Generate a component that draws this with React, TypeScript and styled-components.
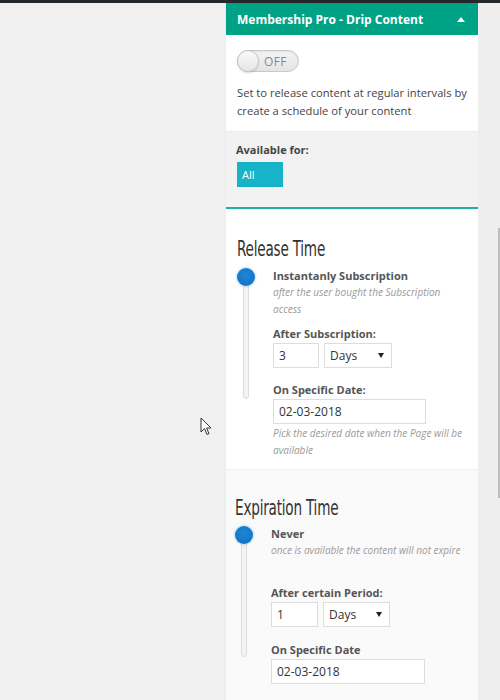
import React from "react";
import styled, { createGlobalStyle } from "styled-components";

const Global = createGlobalStyle`
  html, body { margin: 0; padding: 0; }
  body { background: #f0f0f0; font-family: "Open Sans", "Noto Sans", sans-serif; width: 500px; height: 700px; overflow: hidden; }
`;

const Page = styled.div`
  position: relative;
  width: 500px;
  height: 700px;
  display: flex;
  flex-direction: column;
`;

const TopBar = styled.div`
  height: 3px;
  background: #23282d;
  flex: none;
`;

const Main = styled.div`
  flex: 1;
  display: grid;
  grid-template-columns: 226px 252px 22px;
  min-height: 0;
`;

const Gutter = styled.div`
  background: #eeeeee;
  display: flex;
  justify-content: flex-end;
  align-items: flex-start;
  padding-top: 225px;
`;

const ScrollThumb = styled.div`
  width: 2px;
  height: 270px;
  background: #bdbdbd;
`;

const Panel = styled.div`
  background: #ffffff;
  display: flex;
  flex-direction: column;
  box-shadow: 0 0 1px rgba(0,0,0,0.08);
  overflow: hidden;
`;

const Header = styled.div`
  height: 32px;
  background: #00a286;
  color: #ffffff;
  display: flex;
  align-items: center;
  justify-content: space-between;
  padding: 0 11px 0 11px;
  font-size: 12px;
  font-weight: 700;
  flex: none;
`;

const Caret = styled.span`
  width: 0;
  height: 0;
  border-left: 4px solid transparent;
  border-right: 4px solid transparent;
  border-bottom: 5px solid #ffffff;
  margin-right: 2px;
`;

const Intro = styled.div`
  padding: 15px 6px 11px 11px;
  border-bottom: 1px solid #ececec;
`;

const Toggle = styled.div`
  width: 62px;
  height: 22px;
  box-sizing: border-box;
  border: 1px solid #c9c9c9;
  border-radius: 12px;
  background: linear-gradient(#f4f4f4, #e4e4e4);
  display: flex;
  align-items: center;
  box-shadow: inset 0 1px 2px rgba(0,0,0,0.08);
`;

const Knob = styled.span`
  width: 22px;
  height: 22px;
  margin-left: -1px;
  box-sizing: border-box;
  border-radius: 50%;
  border: 1px solid #c4c4c4;
  background: linear-gradient(#fafafa, #e6e6e6);
  box-shadow: 0 1px 2px rgba(0,0,0,0.15);
`;

const ToggleText = styled.span`
  font-size: 12px;
  color: #8a8a8a;
  margin-left: 5px;
  letter-spacing: 0.3px;
`;

const Description = styled.p`
  margin: 12px 0 0 0;
  font-size: 11.2px;
  line-height: 18px;
  color: #444444;
`;

const Availability = styled.div`
  background: #f2f2f2;
  padding: 10px 11px 20px 10px;
  border-bottom: 2px solid #20b2a6;
`;

const SmallLabel = styled.div`
  font-size: 11px;
  font-weight: 700;
  color: #444444;
  line-height: 16px;
`;

const AllButton = styled.div`
  margin-top: 4px;
  margin-left: 1px;
  width: 46px;
  height: 25px;
  background: #17b3c9;
  color: #ffffff;
  font-size: 11px;
  display: flex;
  align-items: center;
  padding-left: 5px;
  box-sizing: border-box;
`;

const Section = styled.div<{ $tint?: boolean; $shift?: number }>`
  background: ${(p) => (p.$tint ? "#fafafa" : "#ffffff")};
  border-top: ${(p) => (p.$tint ? "1px solid #f0f0f0" : "none")};
  flex: ${(p) => (p.$tint ? 1 : "none")};
  padding: ${(p) => (p.$tint ? "26px" : "28px")} 11px 10px ${(p) => 11 - (p.$shift || 0)}px;
`;

const SectionTitle = styled.h2`
  margin: 0;
  font-family: "DejaVu Sans Condensed", "DejaVu Sans", sans-serif;
  font-stretch: condensed;
  font-weight: 400;
  font-size: 21px;
  line-height: 24px;
  color: #333333;
  transform: scaleX(0.72);
  transform-origin: left center;
  letter-spacing: -0.3px;
  white-space: nowrap;
`;

const Timeline = styled.div<{ $gap: number }>`
  display: grid;
  grid-template-columns: 36px 190px;
  margin-top: ${(p) => p.$gap}px;
`;

const Rail = styled.div<{ $length: number }>`
  position: relative;
  height: ${(p) => p.$length}px;
  display: flex;
  justify-content: center;
  width: 18px;
`;

const Track = styled.div`
  margin-top: 6px;
  width: 6px;
  height: 100%;
  box-sizing: border-box;
  border: 1px solid #dddddd;
  border-radius: 3px;
  background: #f3f3f3;
`;

const Handle = styled.div`
  position: absolute;
  top: 0;
  left: 0;
  width: 18px;
  height: 18px;
  border-radius: 50%;
  background: radial-gradient(circle at 50% 40%, #1f86d6, #0f6fc2);
  box-shadow: 0 0 3px rgba(60,140,220,0.6);
`;

const Options = styled.div`
  display: flex;
  flex-direction: column;
`;

const OptionLabel = styled.div<{ $gap?: number }>`
  font-size: 11px;
  font-weight: 700;
  color: #555555;
  line-height: 16px;
  margin-top: ${(p) => p.$gap || 0}px;
`;

const Hint = styled.div<{ $gap?: number }>`
  font-size: 10px;
  font-style: italic;
  color: #9a9a9a;
  line-height: 17px;
  margin-top: ${(p) => p.$gap || 0}px;
`;

const InputRow = styled.div`
  display: flex;
  gap: 5px;
  margin-top: 1px;
`;

const Field = styled.div<{ $w: number }>`
  width: ${(p) => p.$w}px;
  height: 25px;
  box-sizing: border-box;
  border: 1px solid #dddddd;
  background: #ffffff;
  font-size: 12px;
  color: #333333;
  display: flex;
  align-items: center;
  justify-content: space-between;
  padding: 0 7px 0 5px;
`;

const SelectArrow = styled.span`
  width: 0;
  height: 0;
  border-left: 3px solid transparent;
  border-right: 3px solid transparent;
  border-top: 5px solid #222222;
`;

const Cursor = styled.svg`
  position: absolute;
  left: 200px;
  top: 417px;
`;

export default function App() {
  return (
    <>
      <Global />
      <Page>
        <TopBar />
        <Main>
          <div />
          <Panel>
            <Header>
              <span>Membership Pro - Drip Content</span>
              <Caret />
            </Header>
            <Intro>
              <Toggle>
                <Knob />
                <ToggleText>OFF</ToggleText>
              </Toggle>
              <Description>
                Set to release content at regular intervals by create a schedule of your content
              </Description>
            </Intro>
            <Availability>
              <SmallLabel>Available for:</SmallLabel>
              <AllButton>All</AllButton>
            </Availability>
            <Section>
              <SectionTitle>Release Time</SectionTitle>
              <Timeline $gap={7}>
                <Rail $length={125}>
                  <Track />
                  <Handle />
                </Rail>
                <Options>
                  <OptionLabel>Instantanly Subscription</OptionLabel>
                  <Hint>after the user bought the Subscription access</Hint>
                  <OptionLabel $gap={8}>After Subscription:</OptionLabel>
                  <InputRow>
                    <Field $w={46}>3</Field>
                    <Field $w={68}>
                      Days <SelectArrow />
                    </Field>
                  </InputRow>
                  <OptionLabel $gap={14}>On Specific Date:</OptionLabel>
                  <InputRow>
                    <Field $w={153}>02-03-2018</Field>
                  </InputRow>
                  <Hint $gap={1}>Pick the desired date when the Page will be available</Hint>
                </Options>
              </Timeline>
            </Section>
            <Section $tint $shift={2}>
              <SectionTitle>Expiration Time</SectionTitle>
              <Timeline $gap={6}>
                <Rail $length={125}>
                  <Track />
                  <Handle />
                </Rail>
                <Options>
                  <OptionLabel>Never</OptionLabel>
                  <Hint>once is available the content will not expire</Hint>
                  <OptionLabel $gap={26}>After certain Period:</OptionLabel>
                  <InputRow>
                    <Field $w={47}>1</Field>
                    <Field $w={67}>
                      Days <SelectArrow />
                    </Field>
                  </InputRow>
                  <OptionLabel $gap={15}>On Specific Date</OptionLabel>
                  <InputRow>
                    <Field $w={154}>02-03-2018</Field>
                  </InputRow>
                </Options>
              </Timeline>
            </Section>
          </Panel>
          <Gutter>
            <ScrollThumb />
          </Gutter>
        </Main>
        <Cursor width="12" height="19" viewBox="0 0 12 19">
          <path d="M1 1 L1 15 L4.5 11.5 L7 17.5 L9 16.7 L6.6 11 L11 11 Z" fill="#ffffff" stroke="#333" strokeWidth="1" strokeLinejoin="round" />
        </Cursor>
      </Page>
    </>
  );
}
